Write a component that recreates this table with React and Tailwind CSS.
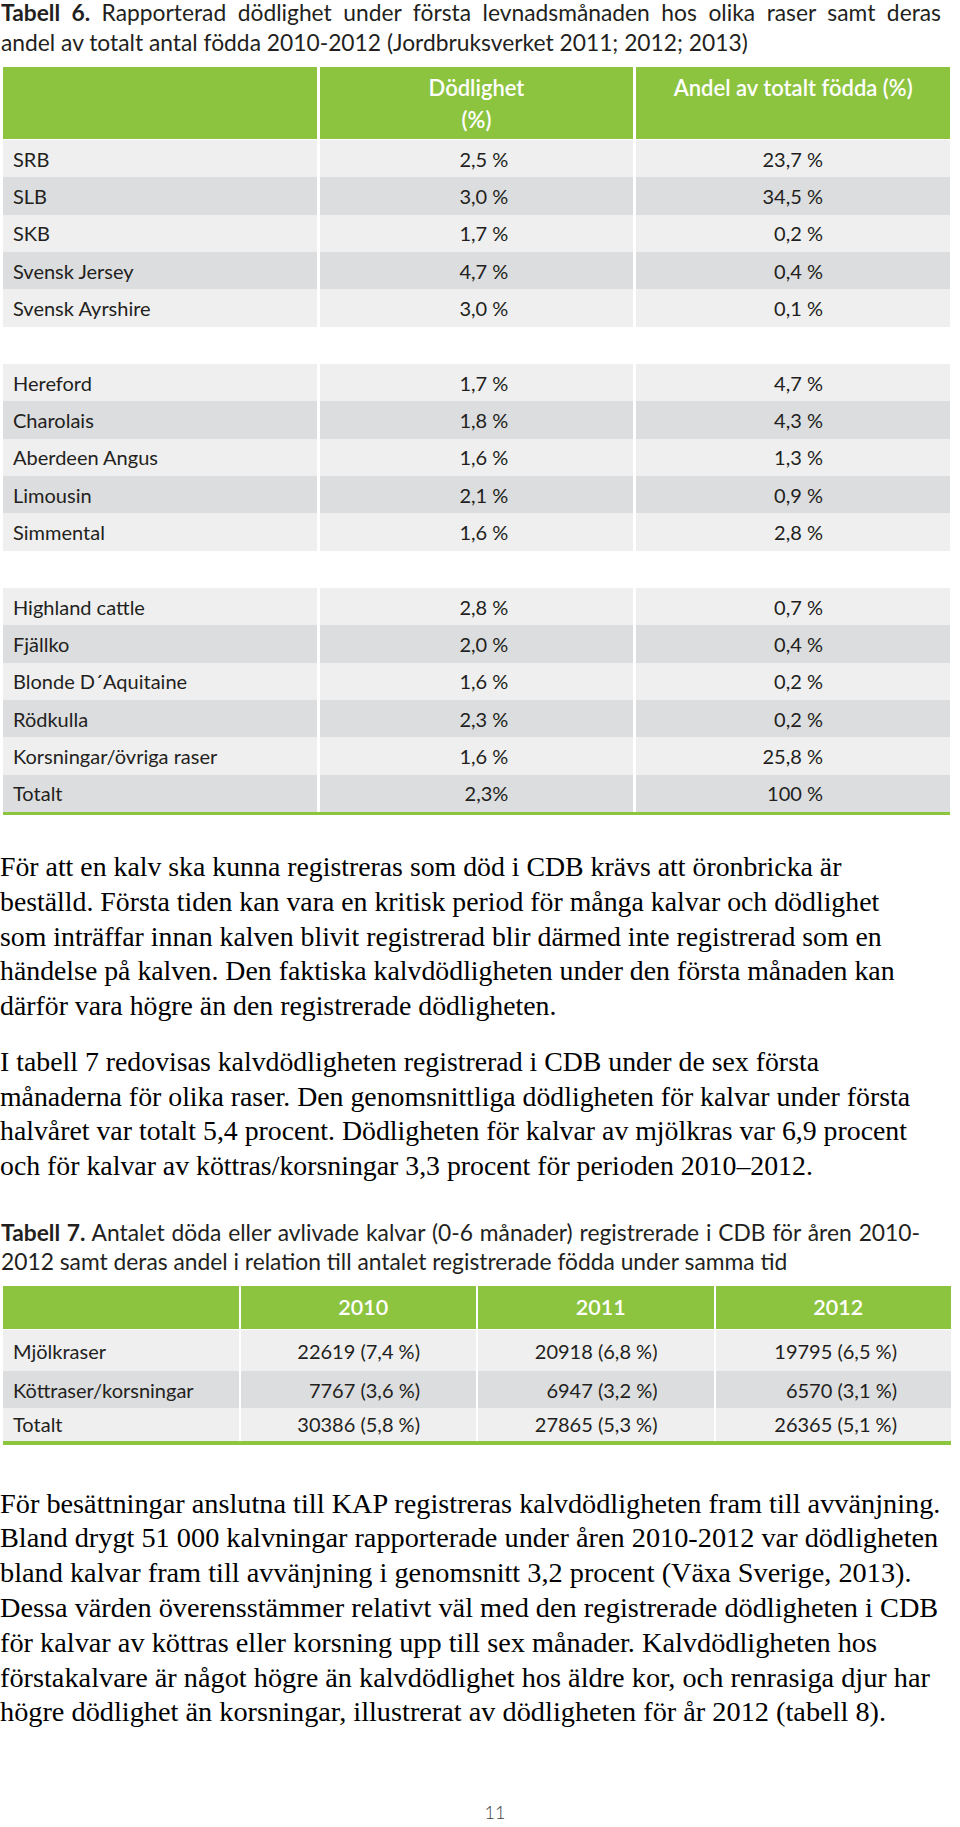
const table6 = [
  [
    ['SRB', '2,5 %', '23,7 %'],
    ['SLB', '3,0 %', '34,5 %'],
    ['SKB', '1,7 %', '0,2 %'],
    ['Svensk Jersey', '4,7 %', '0,4 %'],
    ['Svensk Ayrshire', '3,0 %', '0,1 %'],
  ],
  [
    ['Hereford', '1,7 %', '4,7 %'],
    ['Charolais', '1,8 %', '4,3 %'],
    ['Aberdeen Angus', '1,6 %', '1,3 %'],
    ['Limousin', '2,1 %', '0,9 %'],
    ['Simmental', '1,6 %', '2,8 %'],
  ],
  [
    ['Highland cattle', '2,8 %', '0,7 %'],
    ['Fjällko', '2,0 %', '0,4 %'],
    ['Blonde D´Aquitaine', '1,6 %', '0,2 %'],
    ['Rödkulla', '2,3 %', '0,2 %'],
    ['Korsningar/övriga raser', '1,6 %', '25,8 %'],
    ['Totalt', '2,3%', '100 %'],
  ],
];

const table7 = [
  ['Mjölkraser', '22619 (7,4 %)', '20918 (6,8 %)', '19795 (6,5 %)', 'h-[41px]'],
  ['Köttraser/korsningar', '7767 (3,6 %)', '6947 (3,2 %)', '6570 (3,1 %)', 'h-[36.3px]'],
  ['Totalt', '30386 (5,8 %)', '27865 (5,3 %)', '26365 (5,1 %)', 'h-[33.3px]'],
];

const par1 = [
  'För att en kalv ska kunna registreras som död i CDB krävs att öronbricka är',
  'beställd. Första tiden kan vara en kritisk period för många kalvar och dödlighet',
  'som inträffar innan kalven blivit registrerad blir därmed inte registrerad som en',
  'händelse på kalven. Den faktiska kalvdödligheten under den första månaden kan',
  'därför vara högre än den registrerade dödligheten.',
];

const par2 = [
  'I tabell 7 redovisas kalvdödligheten registrerad i CDB under de sex första',
  'månaderna för olika raser. Den genomsnittliga dödligheten för kalvar under första',
  'halvåret var totalt 5,4 procent. Dödligheten för kalvar av mjölkras var 6,9 procent',
  'och för kalvar av köttras/korsningar 3,3 procent för perioden 2010–2012.',
];

const par3 = [
  'För besättningar anslutna till KAP registreras kalvdödligheten fram till avvänjning.',
  'Bland drygt 51 000 kalvningar rapporterade under åren 2010-2012 var dödligheten',
  'bland kalvar fram till avvänjning i genomsnitt 3,2 procent (Växa Sverige, 2013).',
  'Dessa värden överensstämmer relativt väl med den registrerade dödligheten i CDB',
  'för kalvar av köttras eller korsning upp till sex månader. Kalvdödligheten hos',
  'förstakalvare är något högre än kalvdödlighet hos äldre kor, och renrasiga djur har',
  'högre dödlighet än korsningar, illustrerat av dödligheten för år 2012 (tabell 8).',
];

function Paragraph({ lines, className }) {
  return (
    <div className={"font-['Liberation_Serif','Times_New_Roman',serif] leading-[34.8px] text-black " + className}>
      {lines.map((l) => (
        <div key={l} className="whitespace-nowrap">
          {l}
        </div>
      ))}
    </div>
  );
}

export default function App() {
  return (
    <div className="w-[960px] min-h-[1827px] bg-white text-[#231f20] font-['Lato','Liberation_Sans',sans-serif]">
      <div className="ml-[1px] -mt-[3px] text-[22.8px] leading-[30px] whitespace-nowrap">
        <div className="w-[940px] [text-align-last:justify]">
          <b>Tabell 6.</b> Rapporterad dödlighet under första levnadsmånaden hos olika raser samt deras
        </div>
        <div>andel av totalt antal födda 2010-2012 (Jordbruksverket 2011; 2012; 2013)</div>
      </div>

      <div className="ml-[3px] mt-[10px] w-[947px]">
        <div className="grid grid-cols-3 gap-x-[3px] h-[72px]">
          <div className="bg-[#8cc43f]" />
          <div className="bg-[#8cc43f] pt-[5px] text-center text-[22px] leading-[32px] font-semibold text-white">
            Dödlighet
            <br />
            (%)
          </div>
          <div className="bg-[#8cc43f] pt-[5px] text-center text-[22px] leading-[32px] font-semibold text-white">
            Andel av totalt födda (%)
          </div>
        </div>
        <div className="h-[1px]" />
        {table6.map((section, si) => (
          <div key={si}>
            {si > 0 && <div className="h-[37.33px]" />}
            {section.map((row, ri) => {
              const bg = ri % 2 === 0 ? 'bg-[#efeff0]' : 'bg-[#dcdddf]';
              return (
                <div key={row[0]} className="grid grid-cols-3 gap-x-[3px] h-[37.33px] text-[20px]">
                  <div className={'flex items-center pl-[10px] ' + bg}>{row[0]}</div>
                  <div className={'flex items-center justify-end pr-[125px] ' + bg}>{row[1]}</div>
                  <div className={'flex items-center justify-end pr-[127px] ' + bg}>{row[2]}</div>
                </div>
              );
            })}
          </div>
        ))}
        <div className="h-[3px] bg-[#8cc63f]" />
      </div>

      <Paragraph lines={par1} className="mt-[35px] text-[27.8px]" />
      <Paragraph lines={par2} className="mt-[21px] text-[27.8px]" />

      <div className="ml-[1px] mt-[34px] text-[22.8px] leading-[29px] whitespace-nowrap">
        <div className="w-[919px] [text-align-last:justify]">
          <b>Tabell 7.</b> Antalet döda eller avlivade kalvar (0-6 månader) registrerade i CDB för åren 2010-
        </div>
        <div>2012 samt deras andel i relation till antalet registrerade födda under samma tid</div>
      </div>

      <div className="ml-[3px] mt-[10px] w-[948px]">
        <div className="grid grid-cols-4 gap-x-[2px] h-[42.7px] text-[21.5px] font-semibold text-white">
          <div className="bg-[#8cc43f]" />
          {['2010', '2011', '2012'].map((y) => (
            <div key={y} className="bg-[#8cc43f] flex items-center justify-center pl-[10px]">
              {y}
            </div>
          ))}
        </div>
        <div className="h-[1.7px]" />
        {table7.map((row, ri) => {
          const bg = ri % 2 === 0 ? 'bg-[#efeff0]' : 'bg-[#dcdddf]';
          return (
            <div key={row[0]} className={'grid grid-cols-4 gap-x-[2px] text-[20px] ' + row[4]}>
              <div className={'flex items-center pl-[10px] ' + bg}>{row[0]}</div>
              <div className={'flex items-center justify-end pr-[56px] ' + bg}>{row[1]}</div>
              <div className={'flex items-center justify-end pr-[56px] ' + bg}>{row[2]}</div>
              <div className={'flex items-center justify-end pr-[54px] ' + bg}>{row[3]}</div>
            </div>
          );
        })}
        <div className="h-[3.5px] bg-[#8cc63f]" />
      </div>

      <Paragraph lines={par3} className="mt-[42px] text-[28.3px]" />

      <div className="mt-[72px] pl-[30px] text-center text-[18px] leading-[20px] font-light text-[#404041]">11</div>
    </div>
  );
}
